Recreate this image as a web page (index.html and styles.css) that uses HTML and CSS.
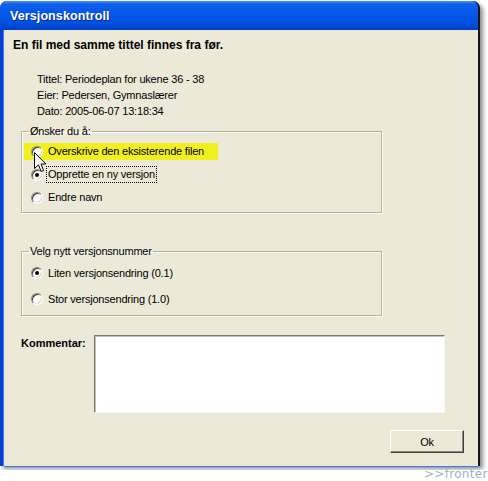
FILE: index.html
```html
<!DOCTYPE html>
<html lang="no">
<head>
  <meta charset="UTF-8" />
  <title>Versjonskontroll</title>
  <link rel="stylesheet" href="styles.css">
</head>
<body>

  <div class="window">
    <div class="titlebar">Versjonskontroll</div>

    <div class="panel">
      <p class="heading">En fil med samme tittel finnes fra før.</p>

      <div class="info">
        <p>Tittel: Periodeplan for ukene 36 - 38</p>
        <p>Eier: Pedersen, Gymnaslærer</p>
        <p>Dato: 2005-06-07 13:18:34</p>
      </div>

      <!-- What to do with the file -->
      <fieldset class="group group-action">
        <legend>Ønsker du å:</legend>
        <div class="row"><span class="opt hl"><span class="radio"></span><span class="txt">Overskrive den eksisterende filen</span></span></div>
        <div class="row"><span class="opt"><span class="radio on"></span><span class="txt focus">Opprette en ny versjon</span></span></div>
        <div class="row"><span class="opt"><span class="radio"></span><span class="txt">Endre navn</span></span></div>
      </fieldset>

      <!-- Version number -->
      <fieldset class="group group-version">
        <legend>Velg nytt versjonsnummer</legend>
        <div class="row"><span class="opt"><span class="radio on"></span><span class="txt">Liten versjonsendring (0.1)</span></span></div>
        <div class="row"><span class="opt"><span class="radio"></span><span class="txt">Stor versjonsendring (1.0)</span></span></div>
      </fieldset>

      <div class="comment">
        <label>Kommentar:</label>
        <div class="textbox"></div>
      </div>

      <div class="actions">
        <div class="btn">Ok</div>
      </div>
    </div>
  </div>

  <svg class="cursor" width="13" height="21" viewBox="0 0 13 21">
    <path d="M0.5 0.5 L0.5 16.5 L4.5 12.8 L7.2 19.5 L9.6 18.5 L7 12 L11.8 12 Z" fill="#fff" stroke="#000" stroke-width="1"/>
  </svg>

  <div class="brand">&gt;&gt;fronter</div>

</body>
</html>
```

FILE: styles.css
```css
body {
  margin: 0;
  background: #fff;
  font-family: 'Liberation Sans', Arial, sans-serif;
  font-size: 11px;
  letter-spacing: -0.2px;
  color: #000;
}
p {
  margin: 0;
}
.window {
  width: 478px;
  margin-top: 1px;
  background: #0a3fd0;
  border-right: 2px solid #161616;
  border-radius: 7px 7px 0 0;
  box-shadow: 3px 3px 4px rgba(0, 0, 0, 0.45);
}
.titlebar {
  height: 29px;
  padding-left: 10px;
  display: flex;
  align-items: center;
  border-radius: 7px 7px 0 0;
  background: linear-gradient(#4d94f8 0, #1060ec 3px, #0458e8 40%, #0150e0 75%, #0040c8 100%);
  color: #fff;
  font-weight: bold;
  font-size: 12.5px;
  letter-spacing: 0.1px;
  text-shadow: 1px 1px 0 #0a2a90;
}
.panel {
  margin: 0 0 4px 4px;
  height: 436px;
  box-sizing: border-box;
  background: #ece9d8;
  padding: 8px 14px 0 9px;
  box-shadow: -1px 0 0 #3a7cf0, 0 1px 0 #3a7cf0;
}
.heading {
  font-weight: bold;
  font-size: 12px;
  line-height: 15px;
  letter-spacing: 0;
}
.info {
  margin: 18px 0 0 24px;
}
.info p {
  line-height: 16px;
}
.group {
  margin: 6px 0 0 8px;
  width: 361px;
  box-sizing: border-box;
  padding: 2px 2px 3px 2px;
  border: 1px solid #b4b19f;
  box-shadow: inset 1px 1px 0 #fff, 1px 1px 0 #fff;
}
.group legend {
  padding: 0 1px;
  margin-left: 5px;
  line-height: 13px;
}
.group-version {
  margin-top: 32px;
}
.row {
  height: 23px;
  display: flex;
  align-items: center;
}
.group-version .row {
  height: 26px;
}
.opt {
  display: inline-flex;
  align-items: center;
  height: 17px;
  padding: 0 12px 0 7px;
}
.hl {
  background: #f2f01c;
}
.radio {
  position: relative;
  width: 10px;
  height: 10px;
  border-radius: 50%;
  border: 1px solid;
  border-color: #8a887c #fff #fff #8a887c;
  background: #fff;
  box-shadow: inset 1px 1px 0 #3c3c3c, inset -1px -1px 0 #d8d4c4;
}
.radio.on::after {
  content: "";
  position: absolute;
  left: 3px;
  top: 3px;
  width: 4px;
  height: 4px;
  border-radius: 50%;
  background: #000;
}
.txt {
  margin-left: 3px;
  padding: 0 1px;
  line-height: 15px;
  border: 1px solid transparent;
}
.focus {
  border: 1px dotted #000;
}
.comment {
  margin: 19px 0 0 8px;
  display: flex;
}
.comment label {
  width: 73px;
  padding-top: 2px;
  font-weight: bold;
  font-size: 11px;
  letter-spacing: 0;
}
.textbox {
  width: 349px;
  height: 76px;
  background: #fff;
  border: 1px solid;
  border-color: #7c7a70 #f8f7f0 #f8f7f0 #7c7a70;
  box-shadow: inset 1px 1px 0 #c4c1b2;
}
.actions {
  margin-top: 17px;
  display: flex;
  justify-content: flex-end;
}
.btn {
  width: 72px;
  height: 21px;
  display: flex;
  align-items: center;
  justify-content: center;
  border: 1px solid;
  border-color: #fff #404040 #404040 #fff;
  box-shadow: inset -1px -1px 0 #8c8a80;
  background: #ece9d8;
}
.cursor {
  position: absolute;
  left: 34px;
  top: 152px;
}
.brand {
  position: absolute;
  left: 424px;
  top: 467px;
  font-family: 'DejaVu Sans', sans-serif;
  font-size: 12px;
  color: #a4afc4;
  letter-spacing: 0.3px;
}
```
